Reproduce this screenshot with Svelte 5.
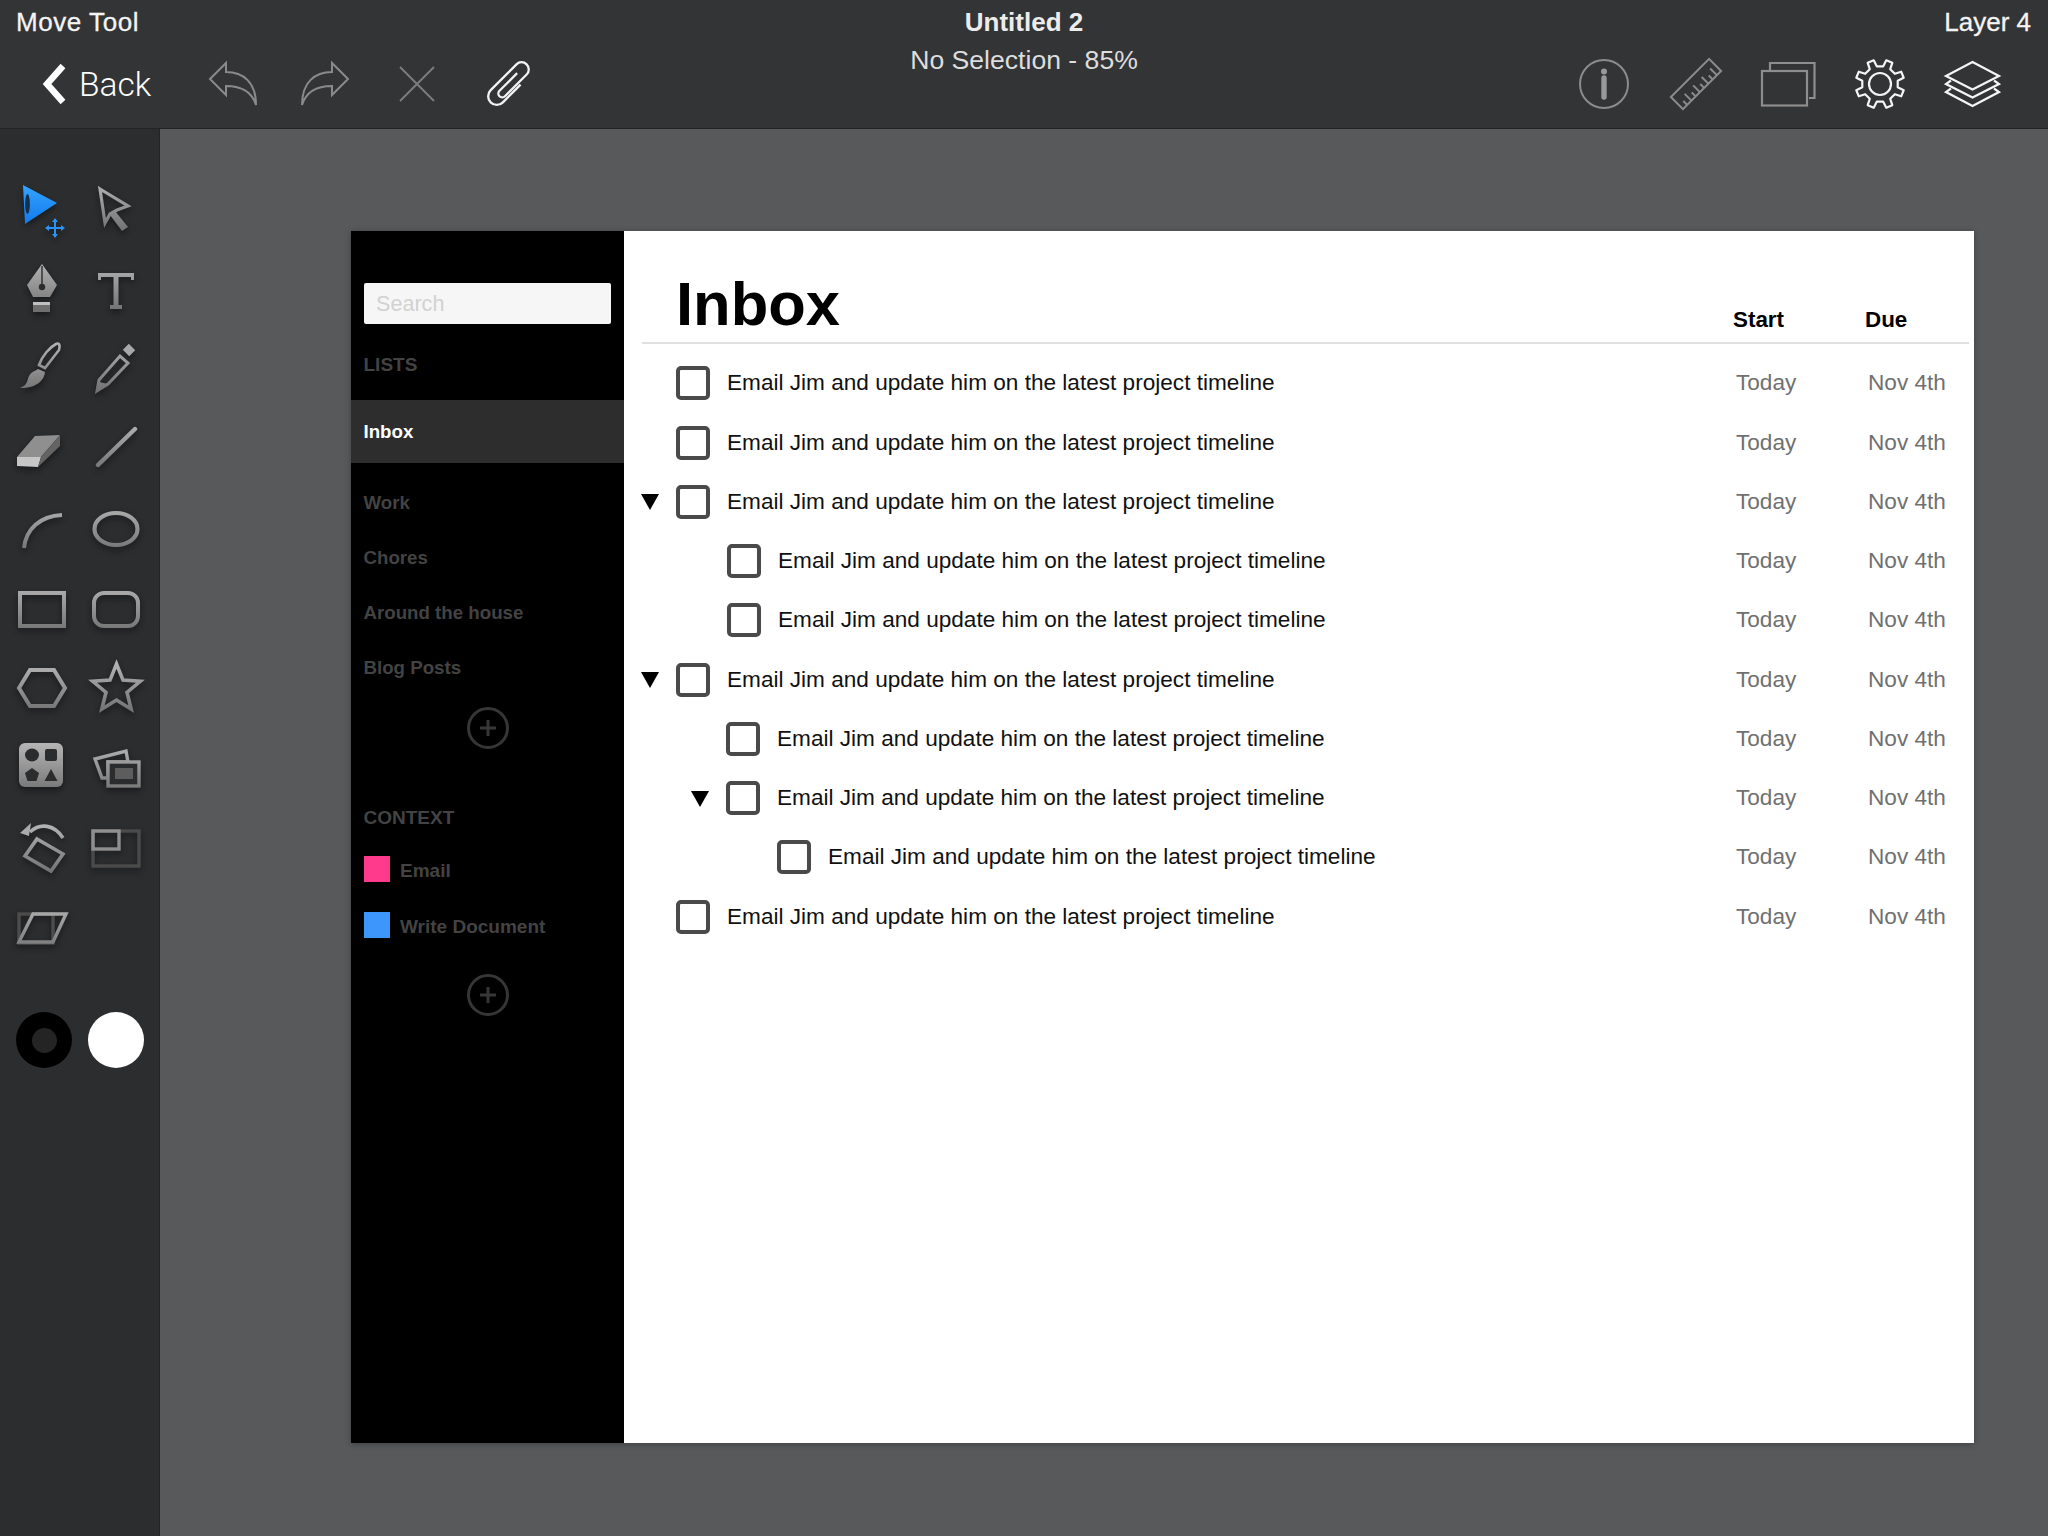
<script>
  const lists = ['Work', 'Chores', 'Around the house', 'Blog Posts'];
  const contexts = [
    { name: 'Email', color: '#ff3a8c' },
    { name: 'Write Document', color: '#3d96fb' }
  ];
  const title = 'Email Jim and update him on the latest project timeline';
  // indent is the nesting offset of the row, open marks a disclosure triangle
  const tasks = [
    { indent: 0, open: false },
    { indent: 0, open: false },
    { indent: 0, open: true },
    { indent: 51, open: false },
    { indent: 51, open: false },
    { indent: 0, open: true },
    { indent: 50, open: false },
    { indent: 50, open: true },
    { indent: 101, open: false },
    { indent: 0, open: false }
  ];

  function gearPath(teeth, outer, inner) {
    const step = (Math.PI * 2) / teeth;
    let d = '';
    for (let i = 0; i < teeth; i++) {
      const a = i * step - step / 2;
      const pts = [
        [inner, a - step * 0.27],
        [outer, a - step * 0.17],
        [outer, a + step * 0.17],
        [inner, a + step * 0.27]
      ];
      for (const [r, t] of pts) {
        d += (d ? 'L' : 'M') + (30 + r * Math.cos(t)).toFixed(2) + ' ' + (30 + r * Math.sin(t)).toFixed(2);
      }
    }
    return d + 'Z';
  }

  function starPoints(cx, cy, R, r) {
    const out = [];
    for (let i = 0; i < 10; i++) {
      const rad = i % 2 ? r : R;
      const t = -Math.PI / 2 + (i * Math.PI) / 5;
      out.push((cx + rad * Math.cos(t)).toFixed(1) + ',' + (cy + rad * Math.sin(t)).toFixed(1));
    }
    return out.join(' ');
  }
</script>

<div class="app">
  <svg class="defs" width="0" height="0" aria-hidden="true">
    <defs>
      <linearGradient id="metal" gradientUnits="userSpaceOnUse" x1="0" y1="4" x2="0" y2="56">
        <stop offset="0" stop-color="#b4b4b4" />
        <stop offset="1" stop-color="#6e6e6e" />
      </linearGradient>
      <linearGradient id="blue" gradientUnits="userSpaceOnUse" x1="0" y1="8" x2="0" y2="48">
        <stop offset="0" stop-color="#35a2ff" />
        <stop offset="1" stop-color="#0f78ea" />
      </linearGradient>
    </defs>
  </svg>

  <header class="topbar">
    <div class="top-left">
      <div class="label move">Move Tool</div>
      <div class="actions">
        <div class="back">
          <svg width="26" height="44" viewBox="0 0 26 44"><path d="M22 4 L6 22 L22 40" fill="none" stroke="#fff" stroke-width="6.4" /></svg>
          <span>Back</span>
        </div>
        <svg class="ticon" viewBox="0 0 60 60"><path d="M7 25 L23 9 V18 C40 18 53 28 53 51 C49 38 38 32 23 32 V41 Z" fill="none" stroke="#8a8a8a" stroke-width="2" stroke-linejoin="miter" /></svg>
        <svg class="ticon" viewBox="0 0 60 60"><path d="M53 25 L37 9 V18 C20 18 7 28 7 51 C11 38 22 32 37 32 V41 Z" fill="none" stroke="#8a8a8a" stroke-width="2" /></svg>
        <svg class="ticon" viewBox="0 0 60 60"><path d="M13 13 L47 47 M47 13 L13 47" stroke="#7c7c7c" stroke-width="2" /></svg>
        <svg class="ticon" viewBox="0 0 60 60"><path transform="rotate(45 30 30) translate(1.2 1.2) scale(.96)" d="M39 22 V48 A9 9 0 0 1 21 48 V10 A7.5 7.5 0 0 1 36 10 V42 A4 4 0 0 1 28 42 V16" fill="none" stroke="#f2f2f2" stroke-width="2.4" /></svg>
      </div>
    </div>

    <div class="top-center">
      <div class="doc">Untitled 2</div>
      <div class="zoom">No Selection - 85%</div>
    </div>

    <div class="top-right">
      <div class="label">Layer 4</div>
      <div class="actions right">
        <svg class="ticon" viewBox="0 0 60 60">
          <circle cx="30" cy="30" r="24" fill="none" stroke="#8c8c8c" stroke-width="2" />
          <circle cx="30" cy="17.5" r="3" fill="#999" />
          <path d="M30 24 V43" stroke="#999" stroke-width="5.4" stroke-linecap="round" />
        </svg>
        <svg class="ticon" viewBox="0 0 60 60">
          <g transform="rotate(-45 30 30)" fill="none" stroke="#8c8c8c" stroke-width="2">
            <rect x="3" y="21.5" width="54" height="17" />
            <path d="M9 38.5 V33 M15 38.5 V29 M21 38.5 V33 M27 38.5 V29 M33 38.5 V33 M39 38.5 V29 M45 38.5 V33 M51 38.5 V29" />
          </g>
        </svg>
        <svg class="ticon" viewBox="0 0 60 60">
          <rect x="4" y="17" width="45" height="34.5" fill="none" stroke="#8e8e8e" stroke-width="2.2" />
          <path d="M12 16 V9 H56.5 V44 H51" fill="none" stroke="#8e8e8e" stroke-width="2.2" />
        </svg>
        <svg class="ticon" viewBox="0 0 60 60">
          <path d={gearPath(8, 24.5, 18)} fill="none" stroke="#f4f4f4" stroke-width="2.2" stroke-linejoin="round" />
          <circle cx="30" cy="30" r="11" fill="none" stroke="#f4f4f4" stroke-width="2.2" />
        </svg>
        <svg class="ticon" viewBox="0 0 60 60" fill="none" stroke="#f4f4f4" stroke-width="2.2">
          <path d="M30.5 8 L57 22 L30.5 35.5 L4 22 Z" />
          <path d="M9 26.5 L4 30 L30.5 43.5 L57 30 L52 26.5" />
          <path d="M9 34.5 L4 38 L30.5 52 L57 38 L52 34.5" />
        </svg>
      </div>
    </div>
  </header>

  <div class="body">
    <aside class="tools">
      <div class="tool-grid">
        <svg class="tool" viewBox="0 0 60 60">
          <path d="M11 7 L45 25 L13 46 Z" fill="url(#blue)" />
          <ellipse cx="15.5" cy="26" rx="2.4" ry="10" fill="#14304f" />
          <path d="M43 40 L46 44 H44 V49 H49 V47 L53 50 L49 53 V51 H44 V56 H46 L43 60 L40 56 H42 V51 H37 V53 L33 50 L37 47 V49 H42 V44 H40 Z" fill="#2a93f5" />
        </svg>
        <svg class="tool" viewBox="0 0 60 60">
          <path d="M15 11 L43 28 L32 32 L25 36 L20 45 Z" fill="none" stroke="url(#metal)" stroke-width="3.2" />
          <path d="M30 33 L43 49 L37 53 L25 37 Z" fill="url(#metal)" />
        </svg>

        <svg class="tool" viewBox="0 0 60 60">
          <path d="M30 6 L45 27 L38 39 H21 L15 27 Z" fill="url(#metal)" />
          <path d="M30 8 V27" stroke="#2b2c2e" stroke-width="1.4" />
          <circle cx="30" cy="29" r="3.2" fill="#2b2c2e" />
          <rect x="21" y="44" width="17" height="3" fill="#c0c0c0" />
          <rect x="21" y="47" width="17" height="7" fill="#6f6f6f" />
        </svg>
        <svg class="tool" viewBox="0 0 60 60">
          <path d="M13 15 H49 V22 H46 V19 H33.5 V47 H37 V51 H25 V47 H28.5 V19 H16 V22 H13 Z" fill="url(#metal)" />
        </svg>

        <svg class="tool" viewBox="0 0 60 60">
          <path d="M44 6 C48 4 48 9 47 12 L33 30 L27 27 C30 18 38 9 44 6 Z" fill="none" stroke="url(#metal)" stroke-width="2.6" />
          <path d="M26 31 L33 34 C32 42 26 50 8 50 C16 47 15 42 17 38 C19 34 23 33 26 31 Z" fill="url(#metal)" />
        </svg>
        <svg class="tool" viewBox="0 0 60 60">
          <path d="M14 42 L35 18 L43 25 L23 46 L12 53 Z" fill="none" stroke="url(#metal)" stroke-width="3" />
          <path d="M41 15 L47 9" stroke="#a8a8a8" stroke-width="9" />
          <path d="M14 44 L12 53 L23 46 Z" fill="url(#metal)" />
        </svg>

        <svg class="tool" viewBox="0 0 60 60">
          <path d="M23 18 L48 17 L29 39 L5 39 Z" fill="#8f8f8f" />
          <path d="M5 39 L29 39 L26 49 L5 48 Z" fill="#c6c6c6" />
          <path d="M48 17 L48 28 L26 49 L29 39 Z" fill="#646464" />
        </svg>
        <svg class="tool" viewBox="0 0 60 60">
          <path d="M13 47 L50 11" stroke="url(#metal)" stroke-width="4.4" stroke-linecap="round" />
        </svg>

        <svg class="tool" viewBox="0 0 60 60"><path d="M12 49 C14 30 28 17 50 16" fill="none" stroke="url(#metal)" stroke-width="4" /></svg>
        <svg class="tool" viewBox="0 0 60 60"><ellipse cx="31" cy="30" rx="21.5" ry="16" fill="none" stroke="url(#metal)" stroke-width="4.2" /></svg>

        <svg class="tool" viewBox="0 0 60 60"><rect x="8" y="14" width="44" height="33" fill="none" stroke="url(#metal)" stroke-width="4" /></svg>
        <svg class="tool" viewBox="0 0 60 60"><rect x="9" y="14" width="44" height="33" rx="10" fill="none" stroke="url(#metal)" stroke-width="4" /></svg>

        <svg class="tool" viewBox="0 0 60 60"><path d="M7 29 L18 11 H42 L53 29 L42 47 H18 Z" fill="none" stroke="url(#metal)" stroke-width="4" /></svg>
        <svg class="tool" viewBox="0 0 60 60"><polygon points={starPoints(31.5, 30, 25, 11)} fill="none" stroke="url(#metal)" stroke-width="3.6" /></svg>

        <svg class="tool" viewBox="0 0 60 60">
          <rect x="7" y="3" width="44" height="44" rx="6" fill="url(#metal)" />
          <ellipse cx="20" cy="15" rx="7" ry="6.5" fill="#2b2c2e" />
          <rect x="33" y="9" width="12" height="12" rx="2" fill="#2b2c2e" />
          <path d="M20 28 L27 33 L24.5 41 H15.5 L13 33 Z" fill="#2b2c2e" />
          <path d="M39 29 L45.5 41 H32.5 Z" fill="#2b2c2e" />
        </svg>
        <svg class="tool" viewBox="0 0 60 60">
          <path d="M10 19 L41 11 L43 22 H23 V38 H17 Z" fill="none" stroke="url(#metal)" stroke-width="3.4" />
          <rect x="23" y="22" width="31" height="24" fill="#2b2c2e" stroke="url(#metal)" stroke-width="3.4" />
          <rect x="30" y="28" width="18" height="11" fill="#5d5d5d" />
        </svg>

        <svg class="tool" viewBox="0 0 60 60">
          <path d="M18 12 C28 3 42 4 51 18" fill="none" stroke="url(#metal)" stroke-width="3.6" />
          <path d="M8 13 L19 3 L17 16 Z" fill="#aaa" />
          <path d="M25 19 L51 34 L39 51 L13 36 Z" fill="none" stroke="url(#metal)" stroke-width="3.6" />
        </svg>
        <svg class="tool" viewBox="0 0 60 60">
          <rect x="8" y="11" width="46" height="35" fill="none" stroke="#4a4a4a" stroke-width="3.4" />
          <rect x="8" y="11" width="26" height="18" fill="none" stroke="#8f8f8f" stroke-width="3.4" />
        </svg>

        <svg class="tool" viewBox="0 0 60 60">
          <rect x="7" y="14" width="34" height="29" fill="none" stroke="#4c4c4c" stroke-width="3.4" />
          <path d="M7 42 L21 14 H54 L41 42 Z" fill="none" stroke="url(#metal)" stroke-width="3.4" />
        </svg>
      </div>

      <div class="colors">
        <div class="stroke-swatch"><span></span></div>
        <div class="fill-swatch"></div>
      </div>
    </aside>

    <main class="canvas">
      <section class="artboard">
        <nav class="side">
          <input class="search" placeholder="Search" readonly />
          <h3>LISTS</h3>
          <div class="item current">Inbox</div>
          <div class="list">
            {#each lists as l}
              <div class="item">{l}</div>
            {/each}
          </div>
          <svg class="add first" viewBox="0 0 42 42"><circle cx="21" cy="21" r="19.5" /><path d="M21 13 V29 M13 21 H29" /></svg>
          <h3 class="context">CONTEXT</h3>
          <div class="ctx-list">
            {#each contexts as c}
              <div class="ctx"><i style="background:{c.color}"></i><span>{c.name}</span></div>
            {/each}
          </div>
          <svg class="add second" viewBox="0 0 42 42"><circle cx="21" cy="21" r="19.5" /><path d="M21 13 V29 M13 21 H29" /></svg>
        </nav>

        <div class="content">
          <div class="head">
            <h1>Inbox</h1>
            <b class="start">Start</b>
            <b class="due">Due</b>
          </div>
          <div class="rows">
            {#each tasks as t}
              <div class="row" style="padding-left:{17 + t.indent}px">
                <span class="twisty">{#if t.open}<svg width="18" height="16" viewBox="0 0 18 16"><path d="M0 0 H18 L9 16 Z" /></svg>{/if}</span>
                <span class="box"></span>
                <span class="task">{title}</span>
                <span class="today">Today</span>
                <span class="nov">Nov 4th</span>
              </div>
            {/each}
          </div>
        </div>
      </section>
    </main>
  </div>
</div>

<style>
  :global(body) {
    margin: 0;
    background: #58595b;
  }

  .app {
    width: 2048px;
    height: 1536px;
    overflow: hidden;
    display: flex;
    flex-direction: column;
    font-family: "Liberation Sans", Arial, sans-serif;
  }

  .defs {
    display: block;
    height: 0;
  }

  .topbar {
    height: 129px;
    flex: none;
    box-sizing: border-box;
    background: #333436;
    border-bottom: 1px solid #232325;
    display: grid;
    grid-template-columns: 1fr auto 1fr;
    color: #fff;
  }

  .label {
    font-size: 26px;
    line-height: 30px;
    padding-top: 7px;
    color: #f4f4f4;
    -webkit-text-stroke: 0.3px #f4f4f4;
  }

  .label.move {
    letter-spacing: 0.55px;
  }

  .top-left .label {
    padding-left: 16px;
  }

  .top-right .label {
    text-align: right;
    padding-right: 17px;
  }

  .actions {
    display: flex;
    gap: 32px;
    align-items: center;
    height: 60px;
    margin-top: 17px;
  }

  .actions.right {
    justify-content: flex-end;
    padding-right: 46px;
  }

  .ticon {
    width: 60px;
    height: 60px;
    flex: none;
  }

  .back {
    display: flex;
    align-items: center;
    width: 171px;
    padding-left: 41px;
    box-sizing: border-box;
    gap: 12px;
    font-family: Roboto, "Liberation Sans", sans-serif;
    font-weight: 300;
    font-size: 33.5px;
  }

  .top-center {
    text-align: center;
  }

  .doc {
    font-size: 26px;
    line-height: 30px;
    padding-top: 7px;
    font-weight: 700;
    color: #ececec;
  }

  .zoom {
    font-size: 26.6px;
    line-height: 30px;
    margin-top: 8px;
    color: #ddd;
  }

  .body {
    flex: 1;
    display: flex;
    min-height: 0;
  }

  .tools {
    width: 160px;
    flex: none;
    box-sizing: border-box;
    background: #2c2d2f;
    border-right: 1px solid #232325;
    padding: 48.5px 0 0 12px;
  }

  .tool-grid {
    display: grid;
    grid-template-columns: 60px 60px;
    column-gap: 13px;
    row-gap: 20.3px;
  }

  .tool {
    width: 60px;
    height: 60px;
    display: block;
    filter: drop-shadow(0 3px 3px rgba(0, 0, 0, 0.45));
  }

  .colors {
    display: flex;
    gap: 16px;
    margin: 52px 0 0 4px;
  }

  .stroke-swatch {
    width: 56px;
    height: 56px;
    border-radius: 50%;
    background: #000;
    display: flex;
    align-items: center;
    justify-content: center;
  }

  .stroke-swatch span {
    width: 25px;
    height: 25px;
    border-radius: 50%;
    background: #242424;
  }

  .fill-swatch {
    width: 56px;
    height: 56px;
    border-radius: 50%;
    background: #fff;
  }

  .canvas {
    flex: 1;
    background: #58595b;
    padding: 102px 0 0 191px;
  }

  .artboard {
    width: 1623px;
    height: 1212px;
    display: flex;
    background: #fff;
    box-shadow: 0 1px 6px rgba(0, 0, 0, 0.3);
  }

  .side {
    width: 273px;
    flex: none;
    background: #000;
    padding-top: 52px;
    box-sizing: border-box;
    color: #434343;
    font-weight: 700;
  }

  .search {
    display: block;
    width: 247px;
    height: 41px;
    box-sizing: border-box;
    margin: 0 13px;
    padding: 0 12px;
    border: none;
    border-radius: 2px;
    background: #f6f6f6;
    font-family: inherit;
    font-size: 21.6px;
    outline: none;
  }

  .search::placeholder {
    color: #d2d2d2;
    opacity: 1;
  }

  h3 {
    margin: 23px 0 17px;
    padding-left: 12.5px;
    height: 36px;
    line-height: 36px;
    font-size: 19px;
    font-weight: 700;
    color: #434343;
  }

  h3.context {
    margin: 51px 0 5px;
  }

  .item {
    height: 55px;
    line-height: 55px;
    padding-left: 12.5px;
    font-size: 18.7px;
  }

  .item.current {
    height: 63px;
    line-height: 63px;
    background: #2d2d2d;
    color: #fff;
  }

  .list {
    margin-top: 12px;
  }

  .add {
    display: block;
    width: 42px;
    height: 42px;
    margin: 12px auto 0;
    fill: none;
    stroke: #363636;
    stroke-width: 3;
  }

  .add.second {
    margin-top: 21px;
  }

  .ctx {
    height: 56px;
    display: flex;
    align-items: center;
    gap: 10px;
    padding-left: 13px;
    font-size: 19px;
  }

  .ctx span {
    margin-top: 3px;
  }

  .ctx i {
    width: 26px;
    height: 26px;
    display: block;
  }

  .content {
    flex: 1;
    min-width: 0;
  }

  .head {
    height: 113px;
    box-sizing: border-box;
    margin: 0 5px 0 18px;
    padding-left: 34px;
    border-bottom: 2px solid #e0e0e0;
    display: flex;
    align-items: flex-end;
  }

  h1 {
    flex: 1;
    margin: 0;
    font-size: 61.5px;
    line-height: 60px;
    padding-bottom: 8px;
    color: #000;
  }

  .head b {
    font-size: 22.4px;
    line-height: 26px;
    padding-bottom: 9px;
    color: #000;
  }

  .start {
    width: 132px;
  }

  .due {
    width: 104px;
  }

  .rows {
    padding-top: 9.7px;
  }

  .row {
    height: 59.25px;
    display: flex;
    align-items: center;
    font-size: 22.6px;
    color: #111;
  }

  .twisty {
    width: 35px;
    flex: none;
    display: flex;
    padding-top: 1px;
  }

  .twisty path {
    fill: #000;
  }

  .box {
    width: 34px;
    height: 34px;
    box-sizing: border-box;
    flex: none;
    border: 4px solid #4a4a4a;
    border-radius: 5px;
    margin-right: 17px;
  }

  .task {
    flex: 1;
  }

  .today {
    width: 132px;
    color: #707070;
  }

  .nov {
    width: 106px;
    color: #707070;
  }
</style>
